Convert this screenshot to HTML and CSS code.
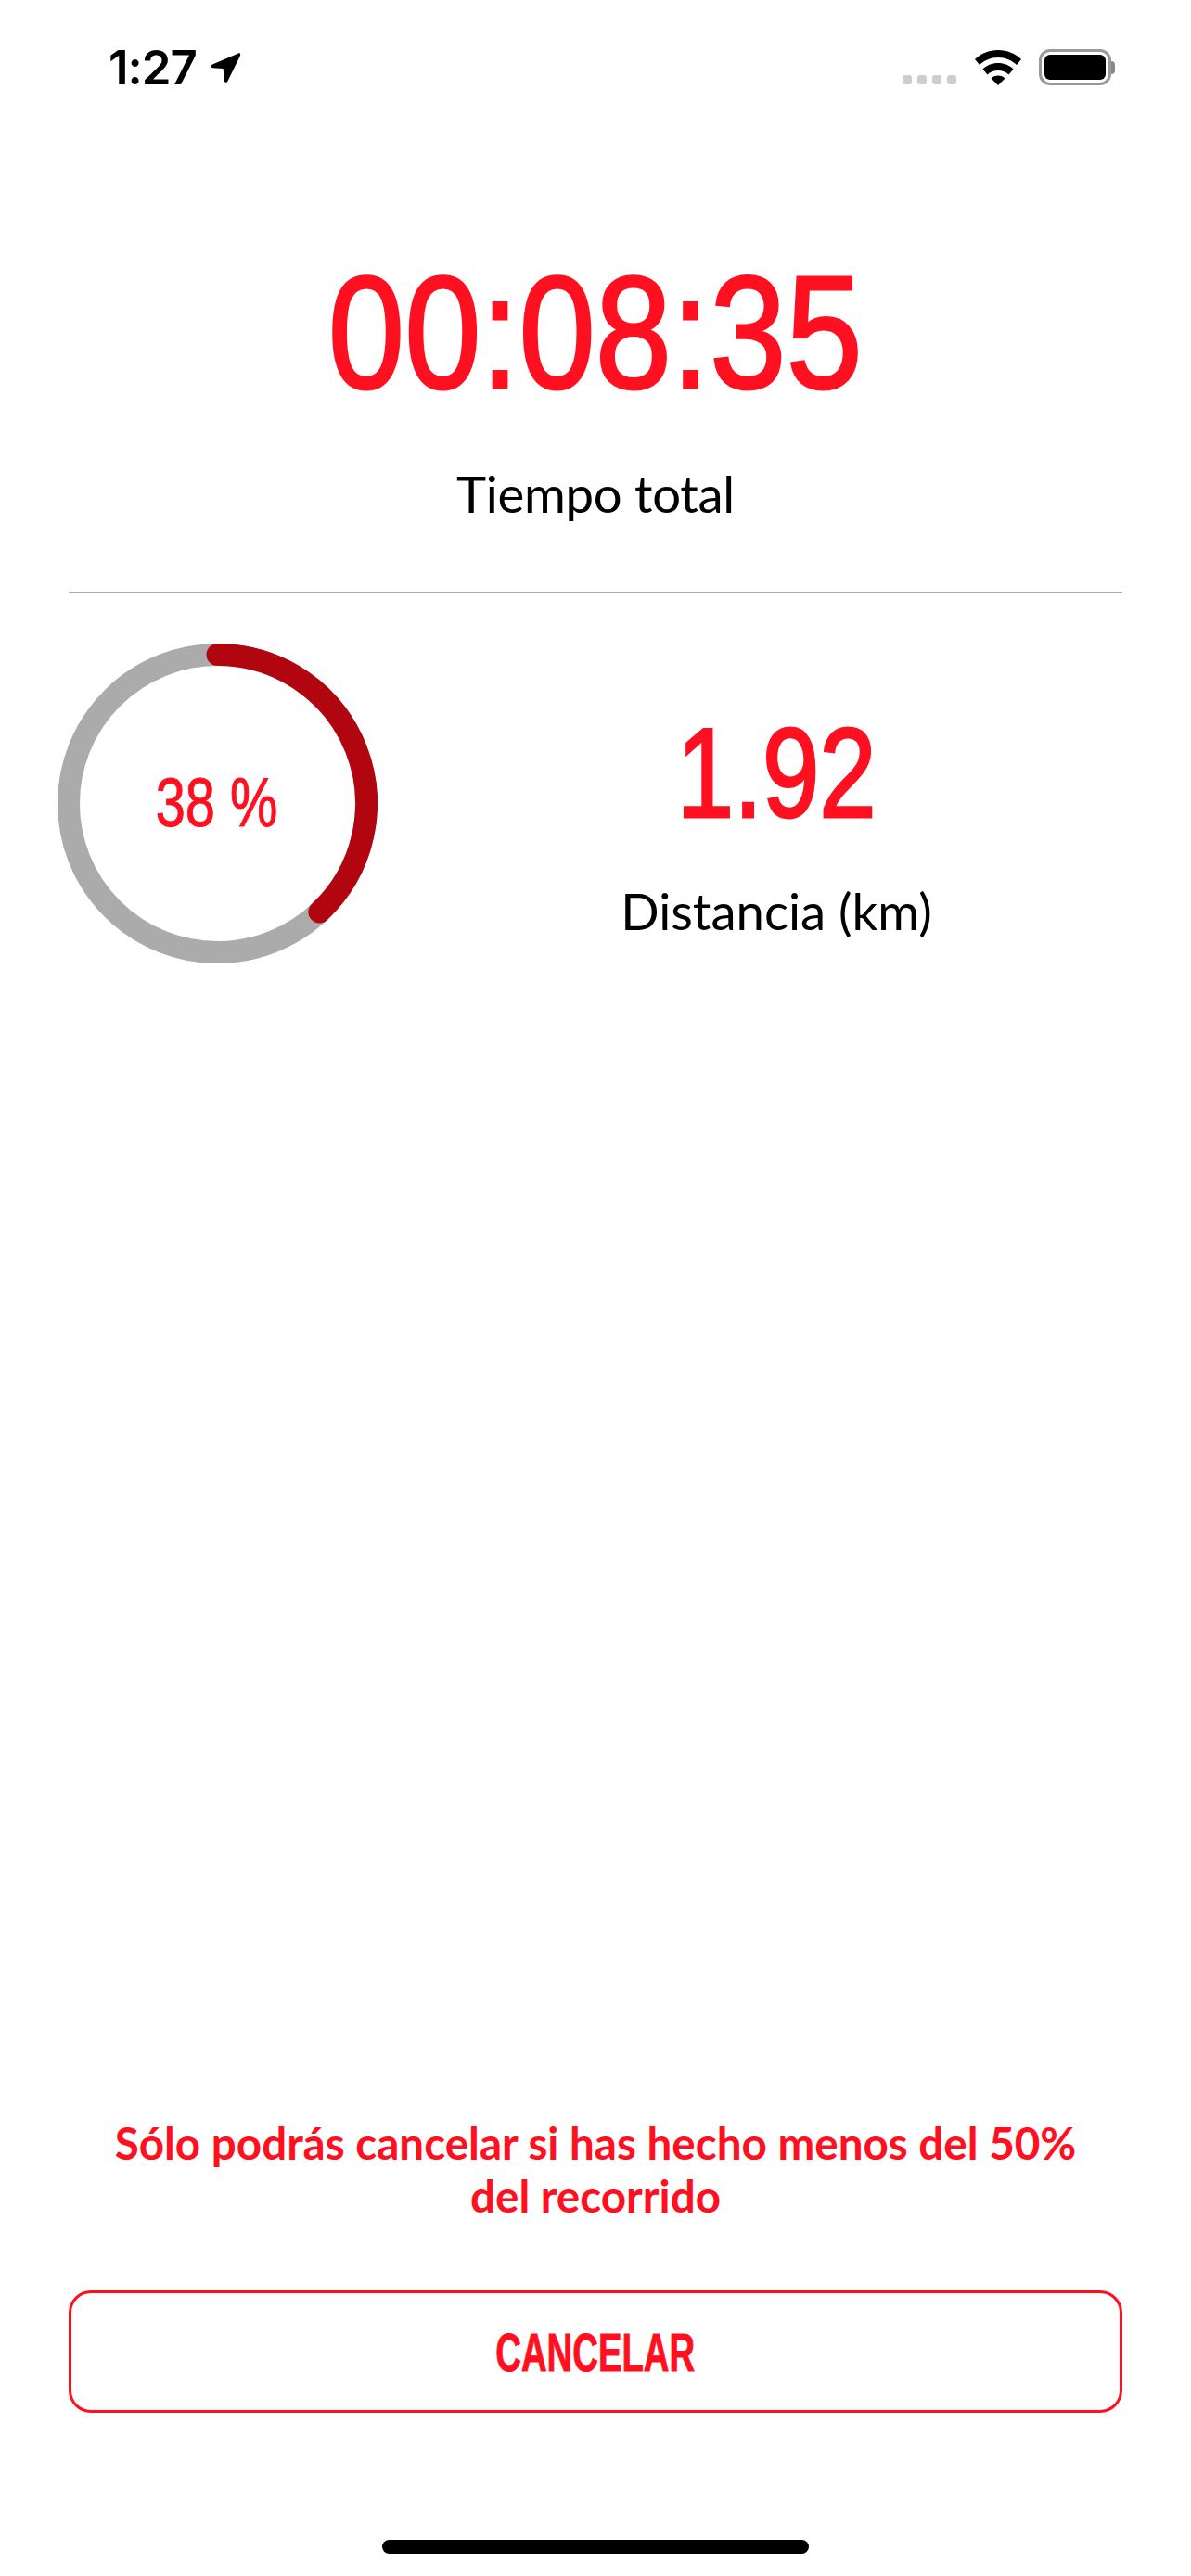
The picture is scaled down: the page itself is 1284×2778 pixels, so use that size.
FILE: index.html
```html
<!DOCTYPE html>
<html lang="es">
<head>
    <meta charset="utf-8">
    <title>Recorrido</title>
    <link rel="stylesheet" href="styles.css">
</head>
<body>
    <div class="page">
        <div class="statusbar">
            <div class="status-left">
                <span class="clock">1:27</span>
                <svg class="arrow" width="34" height="34" viewBox="0 0 34 34">
                    <path d="M31 1.500 3 13.500c-2.400 1-2 3.600.5 3.800l11.200.7.9 12.600c.2 2.600 3 3 4 .6L33 4c.6-1.800-.3-3.200-2-2.500z" fill="#000"/>
                </svg>
            </div>
            <div class="status-right">
                <div class="signal">
                    <span></span><span></span><span></span><span></span>
                </div>
                <svg class="wifi" width="52" height="38" viewBox="0 0 52 38">
                    <path d="M26 0C16 0 7.500 3.700 1 10l5 6c5.200-5 12-8 20-8s14.800 3 20 8l5-6C44.500 3.700 36 0 26 0z" fill="#000"/>
                    <path d="M26 14c-6.500 0-12.400 2.500-16.500 6.500l5 6C17.400 23.700 21.400 22 26 22s8.600 1.700 11.500 4.500l5-6C38.400 16.500 32.500 14 26 14z" fill="#000"/>
                    <path d="M26 27.500c-3 0-5.600 1.100-7.500 3L26 38l7.500-7.500c-1.900-1.900-4.500-3-7.500-3z" fill="#000"/>
                </svg>
                <div class="battery">
                    <div class="battery-fill"></div>
                </div>
                <div class="battery-cap"></div>
            </div>
        </div>

        <div class="total">
            <div class="timer"><span>00:08:35</span></div>
            <div class="label total-label">Tiempo total</div>
        </div>

        <div class="stats">
            <div class="ring">
                <svg width="345" height="345" viewBox="0 0 345 345">
                    <circle cx="172.500" cy="172.500" r="160.500" fill="none" stroke="#ababab" stroke-width="24"/>
                    <path d="M172.500 12A160.500 160.500 0 0 1 282.400 289.500" fill="none" stroke="#b10610" stroke-width="24" stroke-linecap="round"/>
                </svg>
                <span class="ring-text">38 %</span>
            </div>
            <div class="distance">
                <div class="distance-value"><span>1.92</span></div>
                <div class="label">Distancia (km)</div>
            </div>
        </div>

        <div class="bottom">
            <p class="notice">Sólo podrás cancelar si has hecho menos del 50%<br>del recorrido</p>
            <button class="cancel" type="button"><span>CANCELAR</span></button>
            <div class="home-bar"></div>
        </div>
    </div>
</body>
</html>
```

FILE: styles.css
```css
body {
    font-family: Lato, sans-serif;
    background-color: #fff;
    margin: 0;
    padding: 0;
    color: #000;
}

.page {
    height: 2778px;
    display: flex;
    flex-direction: column;
    overflow: hidden;
}

.statusbar {
    height: 100px;
    padding: 52px 82px 0 117px;
    box-sizing: border-box;
    display: flex;
    justify-content: space-between;
    align-items: flex-start;
}

.status-left {
    display: flex;
    align-items: center;
    gap: 14px;
}

.clock {
    font-family: Inter, sans-serif;
    font-weight: 600;
    font-size: 51px;
    line-height: 42px;
    letter-spacing: -1px;
}

.status-right {
    display: flex;
    align-items: flex-start;
}

.signal {
    display: flex;
    gap: 6px;
    margin-top: 29px;
    margin-right: 19px;
}

.signal span {
    width: 10px;
    height: 10px;
    border-radius: 3px;
    background-color: #cdcdcd;
}

.wifi {
    margin-top: 2px;
    margin-right: 18px;
}

.battery {
    width: 78px;
    height: 39px;
    box-sizing: border-box;
    padding: 3px;
    border: 3px solid #999;
    border-radius: 12px;
    margin-top: 1px;
}

.battery-fill {
    height: 100%;
    background-color: #000;
    border-radius: 6px;
}

.battery-cap {
    width: 4px;
    height: 14px;
    margin-top: 14px;
    background-color: #888;
    border-radius: 0 7px 7px 0;
}

/* no condensed family installed, so the numbers are squeezed */
.timer span,
.distance-value span,
.ring-text,
.cancel span {
    display: inline-block;
}

.total {
    text-align: center;
    padding-top: 168px;
}

.timer {
    font-family: "Liberation Sans", sans-serif;
    font-size: 172px;
    line-height: 180px;
    color: #ff1020;
}

.timer span {
    transform: scaleX(0.86);
    -webkit-text-stroke: 3px #ff1020;
}

.label {
    font-size: 54.500px;
    line-height: 64px;
}

.total-label {
    margin-top: 52px;
    letter-spacing: -0.3px;
}

.stats {
    margin: 74px 74px 0;
    padding-top: 54px;
    border-top: 2px solid #a8a8a8;
    display: flex;
}

.ring {
    position: relative;
    width: 345px;
    height: 345px;
    margin-left: -12px;
    display: flex;
    align-items: center;
    justify-content: center;
}

.ring svg {
    position: absolute;
    left: 0;
    top: 0;
}

.ring-text {
    font-family: "Liberation Sans", sans-serif;
    font-size: 75px;
    line-height: 76px;
    color: #ff1020;
    transform: scaleX(0.77);
    -webkit-text-stroke: 1px #ff1020;
    margin: 0 3px 4px 0;
}

.distance {
    flex: 1;
    padding-left: 57px;
    text-align: center;
}

.distance-value {
    font-family: "Liberation Sans", sans-serif;
    font-size: 138px;
    line-height: 146px;
    color: #ff1020;
    margin-top: 66px;
}

.distance-value span {
    transform: scaleX(0.8);
    -webkit-text-stroke: 3px #ff1020;
}

.distance .label {
    margin-top: 44px;
}

.bottom {
    margin-top: auto;
    text-align: center;
}

.notice {
    margin: 0 0 74px;
    font-size: 47.600px;
    font-weight: 700;
    line-height: 57px;
    color: #ff1020;
}

.cancel {
    display: block;
    width: 1136px;
    height: 132px;
    margin: 0 74px;
    background-color: #fff;
    border: 3px solid #ff1020;
    border-radius: 24px;
    font-family: "Liberation Sans", sans-serif;
    font-weight: 700;
    font-size: 58px;
    color: #ff1020;
}

.cancel span {
    transform: scaleX(0.66);
    -webkit-text-stroke: 1px #ff1020;
}

.home-bar {
    width: 460px;
    height: 15px;
    margin: 137px auto 24px;
    background-color: #000;
    border-radius: 8px;
}
```
